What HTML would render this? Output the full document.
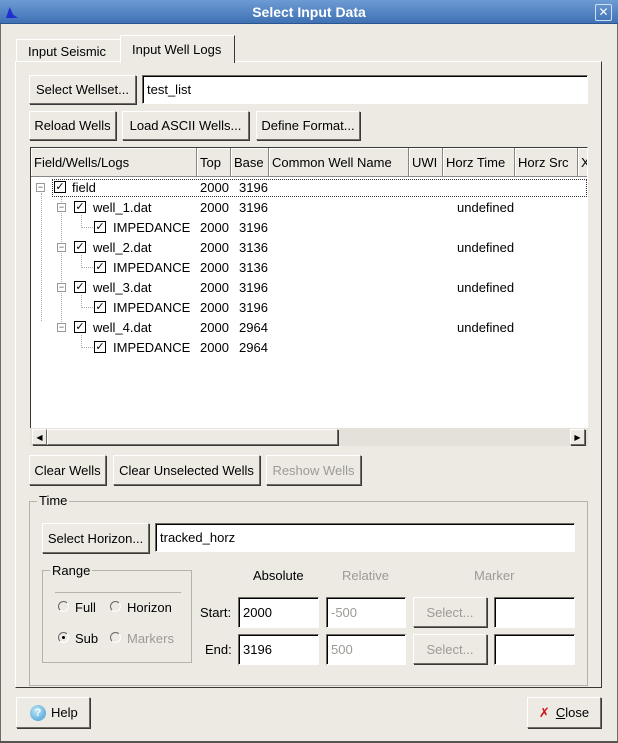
<!DOCTYPE html>
<html><head><meta charset="utf-8"><style>
*{box-sizing:border-box;margin:0;padding:0}
body{width:618px;height:743px;background:#edeae4;font-family:"Liberation Sans","DejaVu Sans",sans-serif;font-size:13px;color:#000;position:relative;overflow:hidden}
.a{position:absolute}
.btn{position:absolute;background:#edeae4;border:1px solid;border-color:#fff #6f6c66 #6f6c66 #fff;box-shadow:1px 1px 0 #3a3835;display:flex;align-items:center;justify-content:center;white-space:nowrap}
.dis{color:#9c9a95}
.fld{position:absolute;background:#fff;border:1px solid;border-color:#6f6c66 #fff #fff #6f6c66;box-shadow:inset 1px 1px 0 #000;padding-left:4px;display:flex;align-items:center}
.hd{position:absolute;top:0;height:29px;border-right:1px solid #8a8782;border-bottom:1px solid #8a8782;display:flex;align-items:center;padding-left:3px;background:#edeae4;box-shadow:inset 1px 1px 0 #fff}
.cb{position:absolute;width:12px;height:12px;border:1px solid #000;background:#fff;font-size:11px;line-height:10px;text-align:center;font-weight:bold}
.ex{position:absolute;width:9px;height:9px;border:1px solid #999;background:#fff;font-size:9px;line-height:6px;text-align:center;color:#444}
.t{position:absolute;white-space:nowrap}
.rad{position:absolute;width:11px;height:11px;border-radius:50%;border:1px solid;border-color:#666 #fff #fff #666;background:#edeae4}
</style></head><body>
<div class="a" style="left:0;top:0;width:618px;height:24px;background:linear-gradient(#6d9bd3,#3f71b4);border-bottom:1px solid #2b5590"></div>
<div class="a" style="left:6px;top:7px;width:12px;height:11px;background:#2030d0;clip-path:polygon(0 100%,30% 0,60% 70%,100% 100%)"></div>
<div class="t" style="left:0;width:618px;top:4px;text-align:center;color:#fff;font-weight:bold;font-size:14px">Select Input Data</div>
<div class="a" style="left:595px;top:4px;width:17px;height:17px;border:1px solid #cfe0f5;border-radius:2px;color:#fff;font-weight:bold;text-align:center;line-height:15px;font-size:12px">✕</div>
<div class="a" style="left:0;top:24px;width:1px;height:719px;background:#6f6c66"></div>
<div class="a" style="left:617px;top:24px;width:1px;height:719px;background:#6f6c66"></div>
<div class="a" style="left:0;top:741px;width:618px;height:2px;background:#55534f"></div>

<div class="a" style="left:16px;top:39px;width:105px;height:23px;border:1px solid #fff;border-right-color:#6f6c66;border-bottom:none"></div>
<div class="t" style="left:28px;top:44px">Input Seismic</div>
<div class="a" style="left:120px;top:35px;width:115px;height:28px;border:1px solid #fff;border-right:1px solid #3a3835;border-bottom:none;background:#edeae4;z-index:2"></div>
<div class="t" style="left:132px;top:42px;z-index:3">Input Well Logs</div>
<div class="a" style="left:15px;top:61px;width:587px;height:627px;border:1px solid;border-color:#fff #3a3835 #3a3835 #fff"></div>

<div class="btn" style="left:29px;top:75px;width:107px;height:29px">Select Wellset...</div>
<div class="fld" style="left:142px;top:75px;width:446px;height:29px">test_list</div>
<div class="btn" style="left:29px;top:111px;width:87px;height:29px">Reload Wells</div>
<div class="btn" style="left:122px;top:111px;width:127px;height:29px">Load ASCII Wells...</div>
<div class="btn" style="left:256px;top:111px;width:104px;height:29px">Define Format...</div>

<div class="a" style="left:30px;top:147px;width:558px;height:299px;background:#fff;border:1px solid;border-color:#3a3835 #fff #fff #3a3835;overflow:hidden">
 <div class="hd" style="left:0;width:166px">Field/Wells/Logs</div>
 <div class="hd" style="left:166px;width:34px">Top</div>
 <div class="hd" style="left:200px;width:38px">Base</div>
 <div class="hd" style="left:238px;width:140px">Common Well Name</div>
 <div class="hd" style="left:378px;width:34px">UWI</div>
 <div class="hd" style="left:412px;width:72px">Horz Time</div>
 <div class="hd" style="left:484px;width:63px">Horz Src</div>
 <div class="hd" style="left:547px;width:40px">X</div>
 <div class="a" style="left:21px;top:31px;width:535px;height:18px;border:1px dotted #333"></div>
 <div class="a" style="left:10px;top:45px;height:128px;border-left:1px dotted #aaa"></div>
</div>
<div class="a" style="left:30px;top:428px;width:558px;height:18px;background:#e4e1db"></div>
<div class="btn" style="left:32px;top:429px;width:15px;height:16px;font-size:8px">◀</div>
<div class="btn" style="left:47px;top:429px;width:291px;height:16px"></div>
<div class="btn" style="left:570px;top:429px;width:15px;height:16px;font-size:8px">▶</div>

<div class="ex" style="left:36px;top:183px">−</div>
<div class="cb" style="left:54px;top:181px">✓</div><div class="t" style="left:72px;top:180px">field</div>
<div class="t" style="left:200px;top:180px">2000</div><div class="t" style="left:239px;top:180px">3196</div>

<div class="a" style="left:61px;top:196px;height:132px;border-left:1px dotted #aaa"></div>
<div class="ex" style="left:57px;top:203px;z-index:1">−</div><div class="cb" style="left:74px;top:201px">✓</div><div class="t" style="left:93px;top:200px">well_1.dat</div><div class="t" style="left:200px;top:200px">2000</div><div class="t" style="left:239px;top:200px">3196</div><div class="t" style="left:457px;top:200px">undefined</div>
<div class="a" style="left:81px;top:215px;width:12px;height:13px;border-left:1px dotted #aaa;border-bottom:1px dotted #aaa"></div>
<div class="cb" style="left:94px;top:221px">✓</div><div class="t" style="left:113px;top:220px">IMPEDANCE</div><div class="t" style="left:200px;top:220px">2000</div><div class="t" style="left:239px;top:220px">3196</div>

<div class="ex" style="left:57px;top:243px;z-index:1">−</div><div class="cb" style="left:74px;top:241px">✓</div><div class="t" style="left:93px;top:240px">well_2.dat</div><div class="t" style="left:200px;top:240px">2000</div><div class="t" style="left:239px;top:240px">3136</div><div class="t" style="left:457px;top:240px">undefined</div>
<div class="a" style="left:81px;top:255px;width:12px;height:13px;border-left:1px dotted #aaa;border-bottom:1px dotted #aaa"></div>
<div class="cb" style="left:94px;top:261px">✓</div><div class="t" style="left:113px;top:260px">IMPEDANCE</div><div class="t" style="left:200px;top:260px">2000</div><div class="t" style="left:239px;top:260px">3136</div>

<div class="ex" style="left:57px;top:283px;z-index:1">−</div><div class="cb" style="left:74px;top:281px">✓</div><div class="t" style="left:93px;top:280px">well_3.dat</div><div class="t" style="left:200px;top:280px">2000</div><div class="t" style="left:239px;top:280px">3196</div><div class="t" style="left:457px;top:280px">undefined</div>
<div class="a" style="left:81px;top:295px;width:12px;height:13px;border-left:1px dotted #aaa;border-bottom:1px dotted #aaa"></div>
<div class="cb" style="left:94px;top:301px">✓</div><div class="t" style="left:113px;top:300px">IMPEDANCE</div><div class="t" style="left:200px;top:300px">2000</div><div class="t" style="left:239px;top:300px">3196</div>

<div class="ex" style="left:57px;top:323px;z-index:1">−</div><div class="cb" style="left:74px;top:321px">✓</div><div class="t" style="left:93px;top:320px">well_4.dat</div><div class="t" style="left:200px;top:320px">2000</div><div class="t" style="left:239px;top:320px">2964</div><div class="t" style="left:457px;top:320px">undefined</div>
<div class="a" style="left:81px;top:335px;width:12px;height:13px;border-left:1px dotted #aaa;border-bottom:1px dotted #aaa"></div>
<div class="cb" style="left:94px;top:341px">✓</div><div class="t" style="left:113px;top:340px">IMPEDANCE</div><div class="t" style="left:200px;top:340px">2000</div><div class="t" style="left:239px;top:340px">2964</div>

<div class="btn" style="left:29px;top:455px;width:77px;height:30px">Clear Wells</div>
<div class="btn" style="left:113px;top:455px;width:147px;height:30px">Clear Unselected Wells</div>
<div class="btn dis" style="left:266px;top:455px;width:95px;height:30px">Reshow Wells</div>

<div class="a" style="left:29px;top:501px;width:559px;height:185px;border:1px solid #b5b2ac"></div>
<div class="t" style="left:37px;top:493px;background:#edeae4;padding:0 2px">Time</div>
<div class="btn" style="left:42px;top:523px;width:107px;height:30px">Select Horizon...</div>
<div class="fld" style="left:155px;top:523px;width:420px;height:29px">tracked_horz</div>

<div class="a" style="left:42px;top:570px;width:150px;height:93px;border:1px solid #b5b2ac"></div>
<div class="t" style="left:50px;top:563px;background:#edeae4;padding:0 2px">Range</div>
<div class="a" style="left:55px;top:592px;width:126px;height:1px;background:#b5b2ac"></div>
<div class="rad" style="left:58px;top:601px"></div><div class="t" style="left:75px;top:600px">Full</div>
<div class="rad" style="left:110px;top:601px"></div><div class="t" style="left:127px;top:600px">Horizon</div>
<div class="rad" style="left:58px;top:632px"><div class="a" style="left:3px;top:3px;width:3px;height:3px;background:#000;border-radius:50%"></div></div><div class="t" style="left:75px;top:631px">Sub</div>
<div class="rad" style="left:110px;top:632px"></div><div class="t dis" style="left:127px;top:631px">Markers</div>

<div class="t" style="left:253px;top:568px">Absolute</div>
<div class="t dis" style="left:342px;top:568px">Relative</div>
<div class="t dis" style="left:474px;top:568px">Marker</div>
<div class="t" style="left:200px;top:605px">Start:</div>
<div class="fld" style="left:238px;top:597px;width:81px;height:31px">2000</div>
<div class="fld dis" style="left:326px;top:597px;width:80px;height:31px">-500</div>
<div class="btn dis" style="left:413px;top:597px;width:74px;height:30px">Select...</div>
<div class="fld" style="left:494px;top:597px;width:81px;height:31px"></div>
<div class="t" style="left:205px;top:642px">End:</div>
<div class="fld" style="left:238px;top:634px;width:81px;height:31px">3196</div>
<div class="fld dis" style="left:326px;top:634px;width:80px;height:31px">500</div>
<div class="btn dis" style="left:413px;top:634px;width:74px;height:30px">Select...</div>
<div class="fld" style="left:494px;top:634px;width:81px;height:31px"></div>

<div class="btn" style="left:16px;top:697px;width:74px;height:31px;justify-content:flex-start;padding-left:13px"><span style="display:inline-block;width:16px;height:16px;border-radius:50%;background:radial-gradient(circle at 40% 35%,#bfe6f8,#3b9ad0);color:#fff;font-size:11px;line-height:16px;text-align:center;font-weight:bold;margin-right:5px">?</span>Help</div>
<div class="btn" style="left:527px;top:697px;width:74px;height:31px"><span style="color:#d01010;font-weight:bold;margin-right:6px">✗</span><span style="text-decoration:underline">C</span>lose</div>
</body></html>
